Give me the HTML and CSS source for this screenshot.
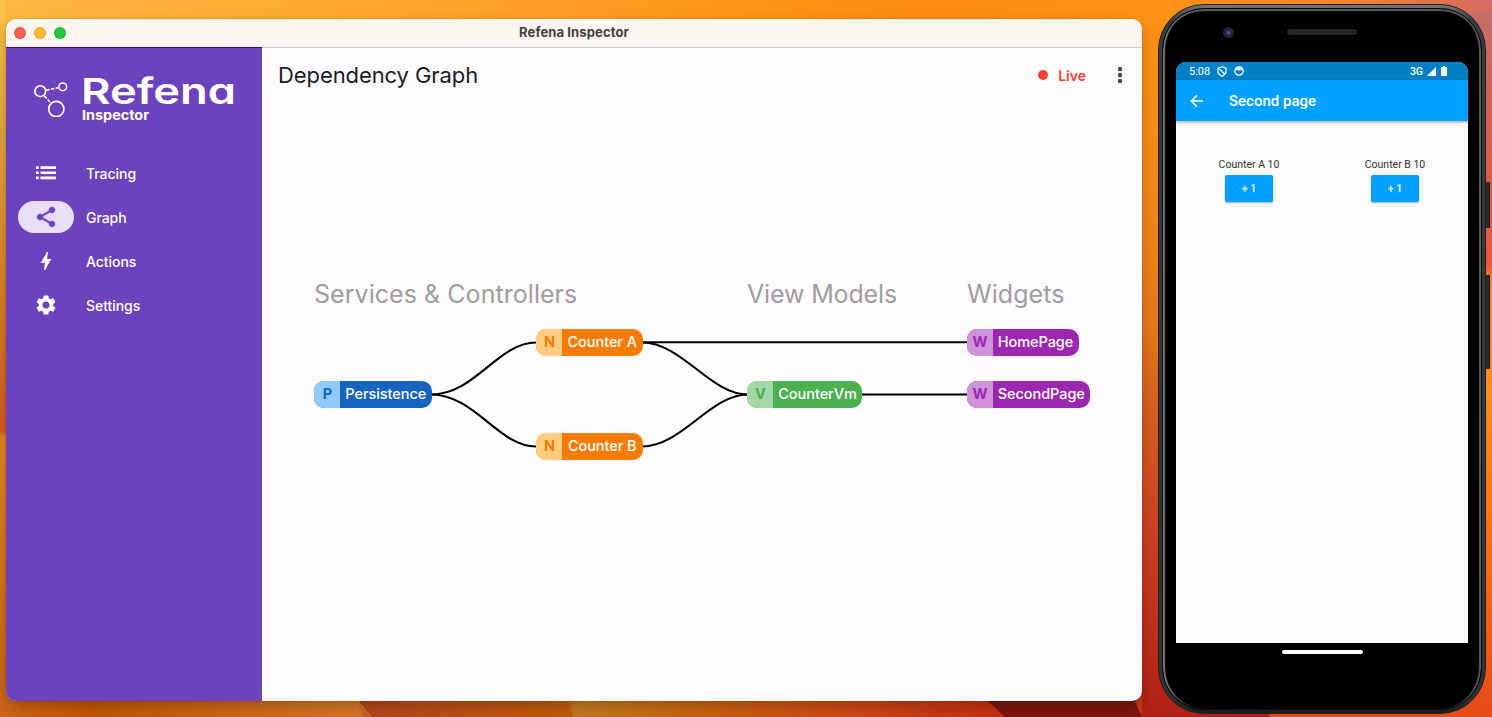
FILE: index.html
```html
<!DOCTYPE html>
<html lang="en">
<head>
<meta charset="utf-8">
<title>Refena Inspector</title>
<link rel="stylesheet" href="styles.css">
</head>
<body>
<div class="desktop">
  <svg class="wallpaper" viewBox="0 0 1492 717" aria-hidden="true">
    <defs>
      <linearGradient id="top" x1="0" x2="1492" y1="0" y2="0" gradientUnits="userSpaceOnUse">
        <stop offset="0" stop-color="#feb840"/><stop offset=".3" stop-color="#fea32a"/><stop offset=".62" stop-color="#fd8c0c"/><stop offset=".78" stop-color="#fe9216"/><stop offset=".9" stop-color="#f58428"/><stop offset="1" stop-color="#d46a64"/>
      </linearGradient>
      <linearGradient id="left" x1="0" x2="0" y1="0" y2="717" gradientUnits="userSpaceOnUse">
        <stop offset="0" stop-color="#fcc446"/><stop offset=".2" stop-color="#e5a63a"/><stop offset=".4" stop-color="#dc8224"/><stop offset=".6" stop-color="#d65a1e"/><stop offset=".61" stop-color="#e5861c"/><stop offset="1" stop-color="#cb6116"/>
      </linearGradient>
      <linearGradient id="mid" x1="0" x2="0" y1="0" y2="717" gradientUnits="userSpaceOnUse">
        <stop offset="0" stop-color="#fe9216"/><stop offset=".25" stop-color="#f28a18"/><stop offset=".45" stop-color="#e8791a"/><stop offset=".56" stop-color="#d9601e"/><stop offset=".75" stop-color="#cc3f22"/><stop offset="1" stop-color="#b02015"/>
      </linearGradient>
      <linearGradient id="right" x1="0" x2="0" y1="0" y2="717" gradientUnits="userSpaceOnUse">
        <stop offset="0" stop-color="#c0706c"/><stop offset=".12" stop-color="#cc6458"/><stop offset=".37" stop-color="#e8583c"/><stop offset=".39" stop-color="#fa8226"/><stop offset=".55" stop-color="#fc8c1c"/><stop offset=".75" stop-color="#f87014"/><stop offset="1" stop-color="#e64a18"/>
      </linearGradient>
      <linearGradient id="bottom" x1="0" x2="1492" y1="0" y2="0" gradientUnits="userSpaceOnUse">
        <stop offset="0" stop-color="#cf6517"/><stop offset=".06" stop-color="#c05606"/><stop offset=".24" stop-color="#d87626"/><stop offset=".25" stop-color="#b2441a"/><stop offset=".38" stop-color="#c05a08"/><stop offset=".385" stop-color="#c47a22"/><stop offset=".46" stop-color="#c8660f"/><stop offset=".56" stop-color="#cc4a14"/><stop offset=".67" stop-color="#c43012"/><stop offset="1" stop-color="#e64a18"/>
      </linearGradient>
      <linearGradient id="ridge" x1="350" x2="574" y1="0" y2="0" gradientUnits="userSpaceOnUse">
        <stop offset="0" stop-color="#b5441c"/><stop offset="1" stop-color="#c05c0a"/>
      </linearGradient>
    </defs>
    <path fill="url(#top)" d="M0 0h1492v80H0z"/>
    <path fill="url(#left)" d="M0 0h5Q8 20 8 40V717H0z"/>
    <path fill="url(#mid)" d="M1130 0h200v717h-200z"/>
    <path fill="url(#top)" d="M1130 0h362v20h-362z"/>
    <path fill="url(#right)" d="M1440 12h52v705h-52z"/>
    <path fill="url(#bottom)" d="M0 690h1142v27H0z"/>
    <path fill="url(#ridge)" d="M349 690h210l15 27H371z"/>
    <path fill="#7c150e" d="M976 690h154l12 27H1005z"/>
    <path fill="#e84c18" d="M1271 712h221v5h-223z"/>
    <path stroke="#db8b42" fill="none" d="M349 690l22 27"/>
  </svg>

  <section class="window">
    <header class="titlebar">
      <span class="light close"></span><span class="light minimize"></span><span class="light maximize"></span>
      <span class="window-title">Refena Inspector</span>
    </header>
    <div class="window-body">
      <aside class="sidebar">
        <div class="brand">
          <svg class="brand-mark" viewBox="0 0 36 38" fill="none" stroke="#fff">
            <circle cx="7.3" cy="12.2" r="5.4" stroke-width="1.6"/>
            <circle cx="29.7" cy="7.800" r="3.900" stroke-width="1.500"/>
            <circle cx="23.300" cy="30" r="7.600" stroke-width="1.700"/>
            <path d="M12.700 11.200L25.800 8.700" stroke-width="1.600" stroke-dasharray="4 1.600 3 1.400"/>
            <path d="M11 16.500L18 24.200" stroke-width="1.600" stroke-dasharray="4 1.400 3 1.200"/>
          </svg>
          <div class="brand-text">
            <svg class="brand-name" viewBox="0 0 156 34"><text x="-1" y="33" textLength="155" lengthAdjust="spacingAndGlyphs">Refena</text></svg>
            <svg class="brand-sub" viewBox="0 0 156 18"><text x="0" y="14.500" textLength="67" lengthAdjust="spacingAndGlyphs">Inspector</text></svg>
          </div>
        </div>
        <nav class="menu">
          <a class="menu-item"><span class="pill"><svg viewBox="0 0 24 24"><path d="M2 5.200h2.700v2.700H2zM2 10.400h2.700v2.700H2zM2 15.600h2.700v2.700H2zM6.500 5.200h15.500v2.700H6.500zM6.500 10.400h15.500v2.700H6.500zM6.500 15.600h15.500v2.700H6.500z"/></svg></span>Tracing</a>
          <a class="menu-item active"><span class="pill"><svg viewBox="0 0 24 24"><path d="M18 16.080c-.76 0-1.440.3-1.960.77L8.910 12.700c.05-.23.090-.46.090-.7s-.04-.47-.09-.7l7.050-4.110c.54.5 1.250.81 2.040.81 1.660 0 3-1.340 3-3s-1.340-3-3-3-3 1.340-3 3c0 .24.040.47.090.7L8.040 9.810C7.500 9.310 6.790 9 6 9c-1.660 0-3 1.340-3 3s1.340 3 3 3c.79 0 1.500-.31 2.040-.81l7.120 4.160c-.05.21-.08.430-.08.650 0 1.610 1.310 2.920 2.920 2.920s2.920-1.310 2.920-2.920-1.310-2.920-2.920-2.920z"/></svg></span>Graph</a>
          <a class="menu-item"><span class="pill"><svg viewBox="0 0 24 24"><path d="M11 21h-1l1-7H7.500c-.88 0-.33-.75-.31-.78C8.480 10.940 10.420 7.540 13.010 3h1l-1 7h3.510c.4 0 .62.190.4.660C12.970 17.550 11 21 11 21z"/></svg></span>Actions</a>
          <a class="menu-item"><span class="pill"><svg viewBox="0 0 24 24"><path d="M19.140 12.940c.04-.3.060-.61.060-.94s-.02-.64-.07-.94l2.030-1.580c.18-.14.230-.41.120-.61l-1.920-3.320c-.12-.22-.37-.29-.59-.22l-2.390.96c-.5-.38-1.030-.7-1.620-.94l-.36-2.540c-.04-.24-.24-.41-.48-.41h-3.840c-.24 0-.43.170-.47.410l-.36 2.540c-.59.240-1.130.57-1.620.94l-2.390-.96c-.22-.08-.47 0-.59.220L2.740 8.870c-.12.210-.08.470.12.610l2.030 1.580c-.05.3-.09.63-.09.94s.02.640.07.940l-2.030 1.580c-.18.140-.23.410-.12.610l1.920 3.320c.12.220.37.290.59.220l2.390-.96c.5.380 1.030.7 1.620.94l.36 2.540c.05.240.24.410.48.410h3.840c.24 0 .44-.17.470-.41l.36-2.540c.59-.24 1.130-.56 1.620-.94l2.390.96c.22.080.47 0 .59-.22l1.920-3.320c.12-.22.070-.47-.12-.61l-2.010-1.580zM12 15.600c-1.980 0-3.600-1.620-3.600-3.600s1.620-3.600 3.600-3.600 3.600 1.620 3.600 3.600-1.620 3.600-3.600 3.600z"/></svg></span>Settings</a>
        </nav>
      </aside>
      <main class="content">
        <div class="toolbar">
          <h1 class="page-title">Dependency Graph</h1>
          <span class="live"><i class="live-dot"></i>Live</span>
          <svg class="more" viewBox="0 0 6 18"><circle cx="3" cy="3" r="2.200"/><circle cx="3" cy="9" r="2.200"/><circle cx="3" cy="15" r="2.200"/></svg>
        </div>
        <div class="canvas">
          <svg class="edges" viewBox="0 0 880 599" fill="none" stroke="#000" stroke-width="2.100">
            <path d="M169 292.500C213 292.500 236 240.500 274 240.500"/>
            <path d="M169 292.500C213 292.500 236 344.500 274 344.500"/>
            <path d="M380 240.300H705"/>
            <path d="M380 240.500C420 240.500 448 292.500 486 292.500"/>
            <path d="M380 344.500C420 344.500 448 292.500 486 292.500"/>
            <path d="M599 292.500H705"/>
          </svg>
          <h2 class="column-title services">Services &amp; Controllers</h2>
          <h2 class="column-title models">View Models</h2>
          <h2 class="column-title widgets">Widgets</h2>
          <div class="node blue persistence"><b>P</b><span>Persistence</span></div>
          <div class="node orange counter-a"><b>N</b><span>Counter A</span></div>
          <div class="node orange counter-b"><b>N</b><span>Counter B</span></div>
          <div class="node green counter-vm"><b>V</b><span>CounterVm</span></div>
          <div class="node purple home-page"><b>W</b><span>HomePage</span></div>
          <div class="node purple second-page"><b>W</b><span>SecondPage</span></div>
        </div>
      </main>
    </div>
  </section>

  <section class="phone">
    <i class="side-button power"></i><i class="side-button volume"></i>
    <div class="bezel">
      <div class="phone-top"><i class="camera"></i><i class="speaker"></i></div>
      <div class="screen">
        <div class="status">
          <span class="clock">5:08</span>
          <svg class="shield" viewBox="0 0 10 11" fill="none" stroke="#fff" stroke-width="1.200"><path d="M5 .8L9 2.200V5C9 7.500 7.500 9.300 5 10.200C2.500 9.300 1 7.500 1 5V2.200zM2.500 2.800L7.500 8"/></svg>
          <svg class="face" viewBox="0 0 10 10"><circle cx="5" cy="5" r="4.200" fill="none" stroke="#fff" stroke-width="1.200"/><path fill="#fff" d="M1.500 2.500Q5-.5 8.500 2.500L8.700 4.600 7 3.800 5 4.700 3 3.800 1.300 4.600z"/></svg>
          <span class="network">3G</span>
          <svg class="signal" viewBox="0 0 9 9"><path fill="#fff" d="M9 0v9H0z"/></svg>
          <svg class="battery" viewBox="0 0 6 10"><path fill="#fff" d="M2 0h2v1h1.300q.7 0 .7.700v7.600q0 .7-.7.700H.7Q0 10 0 9.300V1.700Q0 1 .7 1H2z"/></svg>
        </div>
        <div class="appbar">
          <svg class="back" viewBox="0 0 14 14" fill="none" stroke="#fff" stroke-width="1.500"><path d="M13 7H1.500M7 1.300L1.300 7L7 12.700"/></svg>
          <span class="appbar-title">Second page</span>
        </div>
        <div class="counters">
          <div class="counter"><span>Counter A 10</span><button class="plus">+ 1</button></div>
          <div class="counter"><span>Counter B 10</span><button class="plus">+ 1</button></div>
        </div>
      </div>
      <i class="home-bar"></i>
    </div>
  </section>
</div>
</body>
</html>
```
FILE: styles.css
```css
* { box-sizing: border-box; }
body { margin: 0; overflow: hidden; font-family: Inter, "Liberation Sans", sans-serif; }
h1, h2 { margin: 0; font-weight: 400; }
i { display: block; }
svg { display: block; }

.desktop { position: relative; width: 1492px; height: 717px; overflow: hidden; background: #e07a1a; }
.wallpaper { position: absolute; inset: 0; width: 1492px; height: 717px; }

/* Inspector window */
.window { position: absolute; left: 6px; top: 19px; width: 1136px; height: 682px; display: flex; flex-direction: column; border-radius: 10px; overflow: hidden; background: #fefbff; box-shadow: 0 0 1px rgba(0,0,0,.5), 0 6px 14px rgba(0,0,0,.22); }
.titlebar { position: relative; height: 29px; flex: none; display: flex; align-items: center; gap: 8px; padding: 0 8px 1px; background: #faf5ef; border-bottom: 1px solid #d5cbcd; }
.light { width: 12px; height: 12px; border-radius: 50%; border: 1px solid rgba(0,0,0,.13); }
.close { background: #ff5f57; }
.minimize { background: #febc2e; }
.maximize { background: #28c840; }
.window-title { position: absolute; left: 0; right: 0; top: 5px; text-align: center; font-size: 13px; line-height: 16px; font-weight: 700; letter-spacing: .12px; color: #453f3e; }
.window-body { flex: 1; display: flex; }
.sidebar { width: 256px; background: #6d43bd; margin-top: -1px; border-top: 1px solid #3c0a78; position: relative; }
.brand { display: flex; padding: 23px 0 0 26px; height: 104px; }
.brand-mark { width: 36px; height: 38px; margin: 8px 14px 0 1px; }
.brand-text { display: flex; flex-direction: column; width: 156px; margin-left: -1px; }
.brand-name { width: 156px; height: 34px; overflow: visible; fill: #fff; font-size: 36px; line-height: 34px; font-weight: 600; font-feature-settings: "cv11"; }
.brand-sub { width: 156px; height: 18px; overflow: visible; fill: #fff; font-size: 13px; font-weight: 700; }
.menu { display: flex; flex-direction: column; gap: 12px; padding: 5px 0 0 12px; }
.menu-item { display: flex; align-items: center; gap: 12px; height: 32px; color: #fff; font-size: 14px; font-weight: 500; letter-spacing: -.05px; }
.pill { width: 56px; height: 32px; border-radius: 16px; display: flex; align-items: center; justify-content: center; margin-top: -1px; }
.pill svg { width: 24px; height: 24px; margin-left: -1px; fill: #fff; }
.active .pill { background: #e8def8; }
.active .pill svg { fill: #6d43bd; stroke: #6d43bd; stroke-width: .5px; }

.content { flex: 1; display: flex; flex-direction: column; }
.toolbar { height: 54px; display: flex; align-items: center; padding: 0 19px 0 16px; }
.page-title { flex: 1; font-size: 22px; letter-spacing: -.09px; color: #1c1b1f; }
.live { display: flex; align-items: center; gap: 10px; color: #f44336; font-size: 14px; font-weight: 600; margin-right: 31px; }
.live-dot { width: 10px; height: 10px; border-radius: 50%; background: #f44336; }
.more { width: 6px; height: 18px; fill: #49454f; }

/* Graph canvas */
.canvas { position: relative; flex: 1; }
.edges { position: absolute; left: 0; top: 0; width: 880px; height: 599px; }
.column-title { position: absolute; top: 176px; font-size: 25px; line-height: 32px; color: #9e9e9e; white-space: nowrap; letter-spacing: .05px; }
.services { left: 52px; }
.models { left: 485px; letter-spacing: -.15px; }
.widgets { left: 705px; }
.node { position: absolute; height: 27px; display: flex; border-radius: 10px; overflow: hidden; font-size: 14.500px; line-height: 26px; white-space: nowrap; letter-spacing: -.05px; }
.node b { width: 26px; text-align: center; font-weight: 700; padding-left: 1px; }
.node span { flex: 1; text-align: center; font-weight: 500; color: #fff; }
.blue { background: #1565c0; } .blue b { background: #90caf9; color: #1565c0; }
.orange { background: #f57c00; } .orange b { background: #ffcc80; color: #f57c00; }
.green { background: #4caf50; } .green b { background: #a5d6a7; color: #4caf50; }
.purple { background: #9c27b0; } .purple b { background: #ce93d8; color: #9c27b0; }
.persistence { left: 52px; top: 279px; width: 117.500px; }
.counter-a { left: 274px; top: 227px; width: 106.500px; }
.counter-b { left: 274px; top: 331px; width: 106.500px; }
.counter-vm { left: 485px; top: 279px; width: 115px; }
.home-page { left: 704.500px; top: 227px; width: 112px; }
.second-page { left: 704.500px; top: 279px; width: 123.500px; }

/* Phone emulator */
.phone { position: absolute; left: 1158px; top: 4px; width: 328px; height: 710px; padding: 3px; border-radius: 46px; background: linear-gradient(#77777a, #3b3c3e 2%, #303133 98%, #1c1c1d); border: 1px solid #202123; }
.bezel { height: 100%; display: flex; flex-direction: column; align-items: center; border-radius: 42px; background: #000; border: 1px solid #0a0a0a; box-shadow: inset 3px 0 1px -1px #77787b, inset -3px 0 1px -1px #5c5c5e, inset 0 3px 1px -1px #606164; }
.phone-top { position: relative; height: 53px; width: 100%; display: flex; justify-content: center; flex: none; padding-top: 20px; }
.speaker { width: 70px; height: 6px; border-radius: 3px; background: #242426; }
.camera { position: absolute; left: 60px; top: 18px; width: 11px; height: 11px; border-radius: 50%; background: radial-gradient(circle, #435089 15%, #1b2038 40%, #29292d 65%); }
.screen { width: 292px; height: 581px; flex: none; border-radius: 10px 10px 0 0; overflow: hidden; background: #fbfbfb; font-family: Roboto, sans-serif; }
.status { height: 18px; display: flex; align-items: center; background: #0180c5; color: #fff; font-size: 11px; padding: 0 21px 0 13px; }
.clock { width: 28px; }
.shield { width: 10px; height: 11px; }
.face { width: 10px; height: 10px; margin-left: 7px; }
.network { margin-left: auto; font-weight: 500; font-size: 10.500px; }
.signal { width: 9px; height: 9px; margin: 0 5px 0 4px; }
.battery { width: 6px; height: 10px; }
.appbar { height: 41px; display: flex; align-items: center; background: #02a0fe; box-shadow: 0 1px 3px rgba(0,0,0,.4); color: #fff; padding-left: 14px; }
.back { width: 14px; height: 14px; }
.appbar-title { font-size: 15px; font-weight: 500; margin-left: 25px; }
.counters { display: flex; padding-top: 37px; }
.counter { width: 146px; display: flex; flex-direction: column; align-items: center; font-size: 10.500px; line-height: 13px; color: #333; gap: 4px; }
.plus { width: 48px; height: 27px; border: 0; border-radius: 2px; background: #02a0fe; color: #fff; font: 500 10.500px Roboto, sans-serif; box-shadow: 0 1px 2px rgba(0,0,0,.35); padding: 0; }
.home-bar { width: 81px; height: 4px; border-radius: 2px; background: #fff; margin-top: 7px; }
.side-button { position: absolute; width: 4px; right: -5px; background: #2b2b2d; border-radius: 0 1px 1px 0; border-right: 1px solid #121212; }
.power { top: 177px; height: 46px; }
.volume { top: 270px; height: 94px; }
```
